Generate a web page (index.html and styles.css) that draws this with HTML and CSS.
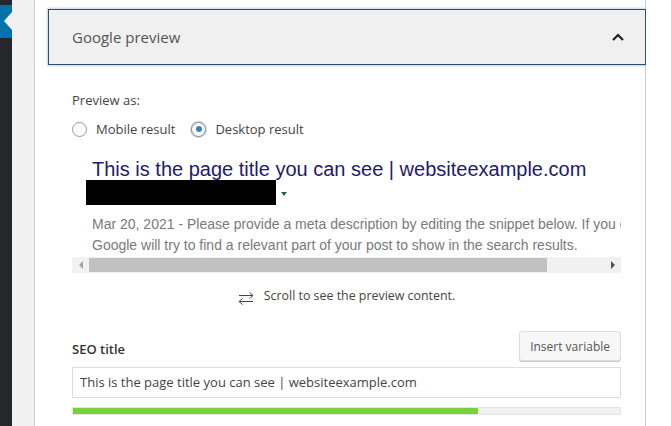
FILE: index.html
```html
<!DOCTYPE html>
<html lang="en">
<head>
  <meta charset="UTF-8" />
  <title>Google preview</title>
  <meta name="viewport" content="width=device-width, initial-scale=1.0" />
  <link rel="stylesheet" href="styles.css">
</head>
<body>

  <div class="sidebar">
    <div class="sidebar-tab"></div>
  </div>
  <div class="gutter"></div>

  <div class="panel">
    <div class="panel-head">
      <span>Google preview</span>
      <svg class="chevron" width="14" height="10" viewBox="0 0 14 10">
        <path d="M2 8 L7 3 L12 8" fill="none" stroke="#1e1e1e" stroke-width="2.2" />
      </svg>
    </div>

    <div class="panel-body">
      <div class="label">Preview as:</div>
      <div class="radios">
        <label class="radio"><span class="dot"></span>Mobile result</label>
        <label class="radio"><span class="dot checked"></span>Desktop result</label>
      </div>

      <div class="snippet">
        <div class="snippet-inner">
          <div class="g-title">This is the page title you can see | websiteexample.com</div>
          <div class="g-url"><span class="redacted"></span><span class="g-arrow"></span></div>
          <div class="g-desc">Mar 20, 2021 - Please provide a meta description by editing the snippet below. If you don't,<br>Google will try to find a relevant part of your post to show in the search results.</div>
        </div>
        <div class="scrollbar">
          <span class="arrow-left"></span>
          <div class="track"><div class="thumb"></div></div>
          <span class="arrow-right"></span>
        </div>
      </div>

      <div class="scroll-note">
        <svg width="16" height="14" viewBox="0 0 16 14">
          <path d="M1 4.5 H15 M11.5 1.5 L15 4.5 L11.5 7.5" fill="none" stroke="#444" stroke-width="1" />
          <path d="M15 10.5 H1 M4.5 7.5 L1 10.5 L4.5 13.5" fill="none" stroke="#444" stroke-width="1" />
        </svg>
        <span>Scroll to see the preview content.</span>
      </div>

      <div class="field-head">
        <span class="field-label">SEO title</span>
        <button class="btn-var">Insert variable</button>
      </div>
      <div class="field-input">This is the page title you can see | websiteexample.com</div>
      <div class="progress"><div class="progress-fill" style="width: 74%"></div></div>
    </div>
  </div>

  <div class="outside"></div>

</body>
</html>
```

FILE: styles.css
```css
body {
  margin: 0;
  display: flex;
  height: 426px;
  overflow: hidden;
  font-family: "Open Sans", "Noto Sans", sans-serif;
  background: #fff;
}

.sidebar {
  width: 12px;
  background: #23282d;
  padding-top: 5px;
  box-sizing: border-box;
}

.sidebar-tab {
  height: 33px;
  background: #0073aa;
  position: relative;
}

.sidebar-tab::after {
  content: "";
  position: absolute;
  right: 0;
  top: 7px;
  border-top: 9px solid transparent;
  border-bottom: 9px solid transparent;
  border-right: 8px solid #f1f1f1;
}

.gutter {
  width: 22px;
  background: #f1f1f1;
}

.panel {
  width: 612px;
  box-sizing: border-box;
  border-left: 1px solid #ccd0d4;
  border-right: 1px solid #ccd0d4;
  padding: 9px 0 0 13px;
  background: #fff;
}

.panel-head {
  height: 56px;
  box-sizing: border-box;
  margin-right: -1px;
  border: 1px solid #2c4f6e;
  box-shadow: 0 0 2px 1px #bcd4ea;
  background: #f0f0f0;
  display: flex;
  align-items: center;
  justify-content: space-between;
  padding: 0 20px 0 23px;
  font-size: 15px;
  color: #555;
}

.panel-body {
  padding: 26px 24px 0 24px;
  color: #444;
  font-size: 13px;
}

.label {
  line-height: 18px;
}

.radios {
  display: flex;
  gap: 16px;
  margin-top: 11px;
  line-height: 18px;
}

.radio {
  display: flex;
  align-items: center;
}

.dot {
  width: 15px;
  height: 15px;
  box-sizing: border-box;
  border: 1px solid #999;
  border-radius: 50%;
  margin-right: 9px;
  position: relative;
  background: #fff;
}

.dot.checked {
  border-color: #7e8993;
  box-shadow: 0 0 0 1px #c5d9ea;
}

.dot.checked::after {
  content: "";
  position: absolute;
  left: 3.5px;
  top: 3.5px;
  width: 6px;
  height: 6px;
  border-radius: 50%;
  background: #3582c4;
}

.snippet {
  margin-top: 20px;
}

.snippet-inner {
  overflow: hidden;
  white-space: nowrap;
  padding-left: 20px;
  font-family: "Liberation Sans", Arial, sans-serif;
}

.g-title {
  font-size: 20px;
  line-height: 22px;
  color: #1e1a6e;
}

.g-url {
  display: flex;
  align-items: center;
  margin-left: -6px;
  height: 25px;
}

.redacted {
  width: 190px;
  height: 25px;
  background: #000;
}

.g-arrow {
  margin-left: 5px;
  margin-top: 3px;
  border-left: 3px solid transparent;
  border-right: 3px solid transparent;
  border-top: 4px solid #1e6a3e;
}

.g-desc {
  margin-top: 9px;
  font-size: 14px;
  line-height: 21px;
  color: #7a7a7a;
}

.scrollbar {
  display: flex;
  align-items: center;
  height: 16px;
  background: #f1f1f1;
  margin-top: 1px;
}

.arrow-left,
.arrow-right {
  width: 17px;
  display: flex;
  justify-content: center;
}

.arrow-left::before {
  content: "";
  border-top: 4px solid transparent;
  border-bottom: 4px solid transparent;
  border-right: 4px solid #a3a3a3;
}

.arrow-right::before {
  content: "";
  border-top: 4px solid transparent;
  border-bottom: 4px solid transparent;
  border-left: 4px solid #505050;
}

.track {
  flex: 1;
  height: 14px;
}

.thumb {
  width: 458px;
  height: 14px;
  background: #c1c1c1;
}

.scroll-note {
  display: flex;
  justify-content: center;
  align-items: center;
  gap: 10px;
  margin-top: 13px;
  color: #444;
  font-size: 12.4px;
  line-height: 18px;
}

.scroll-note svg {
  margin-top: 5px;
}

.field-head {
  display: flex;
  justify-content: space-between;
  align-items: flex-end;
  margin-top: 26px;
}

.field-label {
  font-weight: 600;
  font-size: 13px;
  color: #333;
  padding-bottom: 3px;
}

.btn-var {
  font-family: inherit;
  font-size: 12px;
  color: #555;
  background: #f7f7f7;
  border: 1px solid #ddd;
  border-radius: 3px;
  box-shadow: 0 1px 0 #ccc;
  padding: 0 10px;
  height: 30px;
}

.field-input {
  margin-top: 6px;
  height: 31px;
  box-sizing: border-box;
  border: 1px solid #ddd;
  padding: 0 7px;
  line-height: 29px;
  color: #444;
}

.progress {
  margin-top: 9px;
  height: 8px;
  box-sizing: border-box;
  border: 1px solid #e4e4e4;
  background: #f1f1f1;
}

.progress-fill {
  height: 6px;
  background: #7ad03a;
}

.outside {
  flex: 1;
  background: #fff;
}
```
